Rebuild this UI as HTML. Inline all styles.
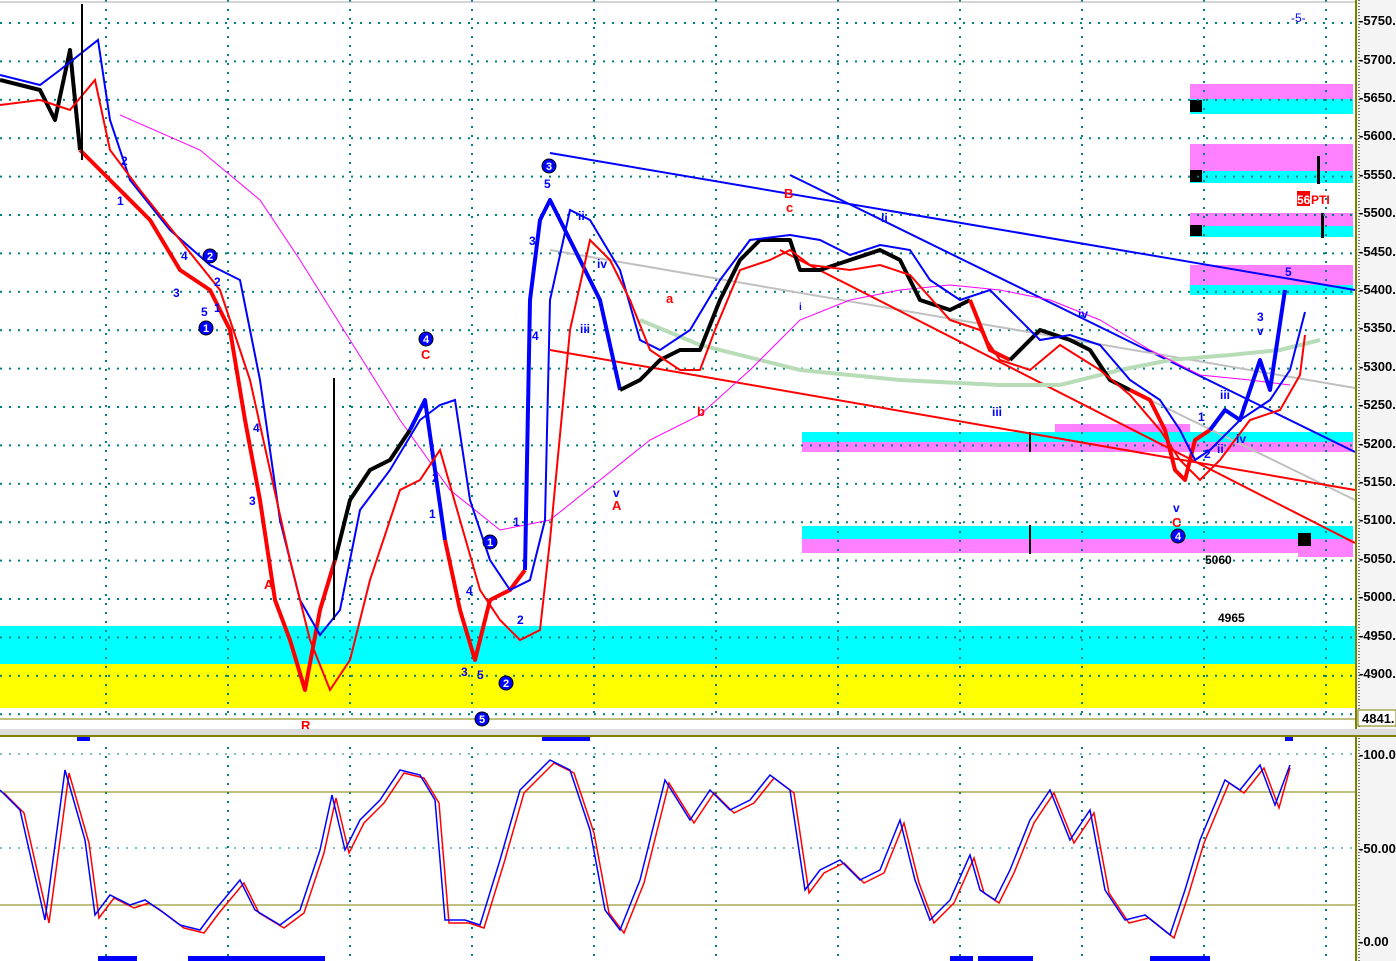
<!DOCTYPE html>
<html><head><meta charset="utf-8"><style>
html,body{margin:0;padding:0;background:#fff;overflow:hidden}
svg{display:block;font-family:"Liberation Sans",sans-serif}
</style></head><body>
<svg width="1396" height="961" viewBox="0 0 1396 961" xmlns="http://www.w3.org/2000/svg">
<defs>
<pattern id="hg" width="9" height="38.4" patternUnits="userSpaceOnUse" y="22">
<rect x="0" y="0" width="2" height="2" fill="#008080"/>
</pattern>
<pattern id="vg" width="122" height="9" patternUnits="userSpaceOnUse" x="105">
<rect x="0" y="0" width="2" height="2" fill="#008080"/>
</pattern>
</defs>
<rect width="1396" height="961" fill="#fff"/>
<!-- bands -->
<rect x="0" y="626" width="1355" height="38" fill="#00ffff"/>
<rect x="0" y="664" width="1355" height="44" fill="#ffff00"/>
<rect x="1190" y="84" width="163" height="15" fill="#ff80ff"/><rect x="1190" y="99" width="163" height="15" fill="#00ffff"/>
<rect x="1190" y="144" width="163" height="27" fill="#ff80ff"/><rect x="1190" y="171" width="163" height="12" fill="#00ffff"/>
<rect x="1190" y="213" width="163" height="13" fill="#ff80ff"/><rect x="1190" y="226" width="163" height="11" fill="#00ffff"/>
<rect x="1190" y="265" width="163" height="20" fill="#ff80ff"/><rect x="1190" y="285" width="163" height="10" fill="#00ffff"/>
<rect x="802" y="432" width="551" height="10" fill="#00ffff"/><rect x="802" y="442" width="551" height="10" fill="#ff80ff"/>
<rect x="1055" y="424" width="135" height="8" fill="#ff80ff"/>
<rect x="802" y="526" width="551" height="13" fill="#00ffff"/><rect x="802" y="539" width="496" height="14" fill="#ff80ff"/>
<rect x="1298" y="539" width="55" height="18" fill="#ff80ff"/>
<rect x="1190" y="100" width="12" height="12" fill="#000"/><rect x="1190" y="170" width="12" height="12" fill="#000"/>
<rect x="1190" y="225" width="12" height="11" fill="#000"/><rect x="1298" y="533" width="13" height="13" fill="#000"/>
<rect x="1317" y="156" width="3" height="28" fill="#000"/><rect x="1321" y="213" width="3" height="25" fill="#000"/>
<rect x="1029" y="432" width="2" height="20" fill="#000"/><rect x="1029" y="525" width="2" height="29" fill="#000"/>
<!-- grid -->
<rect x="0" y="0" width="1355" height="720" fill="url(#hg)"/>
<rect x="0" y="0" width="1355" height="720" fill="url(#vg)"/>
<line x1="0" y1="2" x2="1355" y2="2" stroke="#aaa"/>
<line x1="0" y1="719" x2="1355" y2="719" stroke="#808000"/>
<!-- trend lines -->
<g stroke-width="2" fill="none">
<line x1="550" y1="153" x2="1355" y2="290" stroke="#0000ff"/>
<line x1="790" y1="175" x2="1355" y2="452" stroke="#0000ff"/>
<line x1="550" y1="250" x2="1355" y2="388" stroke="#c0c0c0"/>
<line x1="1150" y1="400" x2="1355" y2="500" stroke="#c0c0c0"/>
<line x1="550" y1="350" x2="1355" y2="490" stroke="#ff0000"/>
<line x1="780" y1="250" x2="1355" y2="543" stroke="#ff0000"/>
<polyline stroke="#b8dcb8" stroke-width="4" points="640,320 700,345 800,370 900,380 1000,385 1060,385 1120,370 1170,360 1230,355 1280,350 1320,340"/>
<polyline stroke="#ff00ff" stroke-width="1" points="120,115 200,150 260,200 300,260 350,340 400,420 450,490 500,530 550,520 600,480 650,440 700,415 750,370 800,320 850,300 900,290 950,285 1000,290 1050,300 1100,320 1150,350 1200,375 1250,380 1290,385"/>
</g>
<!-- price -->
<g fill="none" stroke-width="4" stroke-linejoin="round">
<polyline stroke="#000" points="0,80 40,90 55,120 70,50 80,150"/>
<polyline stroke="#ff0000" points="80,150 100,170 120,190 150,220 180,270 210,290 230,330 245,420 260,500 275,600 290,640 305,690 320,610 335,560"/>
<polyline stroke="#000" points="335,560 350,500 370,470 390,460 410,430"/>
<polyline stroke="#0000ff" points="410,430 425,400 435,470 445,540"/>
<polyline stroke="#ff0000" points="445,540 460,610 475,660 490,600 510,590 525,570"/>
<polyline stroke="#0000ff" points="525,570 530,300 540,220 550,200 565,230 580,260 600,300 620,390"/>
<polyline stroke="#000" points="620,390 640,380 660,360 680,350 700,350 720,300 740,260 760,240 790,240 800,270 820,270 850,260 880,250 900,260 920,300 950,310 970,300"/>
<polyline stroke="#ff0000" points="970,300 990,350 1010,360"/>
<polyline stroke="#000" points="1010,360 1040,330 1070,340 1090,350 1110,380 1130,390"/>
<polyline stroke="#ff0000" points="1130,390 1150,400 1165,430 1175,470 1185,480 1195,440 1210,430"/>
<polyline stroke="#0000ff" points="1210,430 1225,410 1240,420 1260,360 1270,390 1285,290"/>
</g>
<g fill="none" stroke-width="2">
<polyline stroke="#0000ff" points="0,75 40,85 60,70 98,40 110,120 130,180 170,230 210,265 240,280 260,380 280,520 300,600 320,635 340,610 360,510 390,470 420,420 440,405 455,400 470,500 490,560 510,590 530,580 545,520 550,300 570,210 590,220 620,270 640,340 660,350 690,330 720,280 750,240 790,235 820,240 850,255 880,245 910,250 930,280 960,300 990,290 1010,310 1040,340 1070,335 1100,345 1130,380 1160,400 1180,430 1195,460 1210,450 1240,420 1270,400 1290,370 1305,312"/>
<polyline stroke="#ff0000" points="0,105 40,100 70,110 95,80 110,150 140,190 180,240 220,290 250,380 270,470 290,560 310,640 330,690 350,660 370,580 400,490 420,480 440,450 460,520 480,590 500,620 520,640 540,630 550,540 570,330 590,240 610,260 630,300 650,350 680,370 700,370 715,330 740,270 770,260 790,250 810,265 850,270 880,265 910,275 950,320 980,330 1000,360 1030,370 1060,345 1100,370 1130,395 1160,430 1180,460 1200,480 1220,460 1250,420 1280,410 1300,375 1305,335"/>
<line x1="82" y1="4" x2="82" y2="160" stroke="#000"/>
<line x1="334" y1="378" x2="334" y2="620" stroke="#000"/>
</g>
<!-- labels -->
<g font-size="12" font-weight="bold" fill="#0000ff">
<text x="121" y="165">2</text><text x="117" y="205">1</text><text x="181" y="260">4</text><text x="173" y="297">3</text><text x="201" y="316">5</text><text x="214" y="286">2</text><text x="214" y="312">1</text>
<text x="253" y="432">4</text><text x="249" y="505">3</text><text x="432" y="482">2</text><text x="429" y="518">1</text><text x="466" y="595">4</text><text x="461" y="676">3</text><text x="477" y="679">5</text><text x="513" y="526">1</text><text x="517" y="624">2</text>
<text x="529" y="245">3</text><text x="544" y="188">5</text><text x="532" y="340">4</text><text x="578" y="220">ii</text><text x="597" y="268">iv</text><text x="580" y="333">iii</text><text x="613" y="497">v</text>
<text x="799" y="310" font-size="10">i</text><text x="881" y="222">ii</text><text x="992" y="416">iii</text><text x="1078" y="318">iv</text><text x="1173" y="512">v</text>
<text x="1198" y="421">1</text><text x="1204" y="458">2</text><text x="1220" y="399">iii</text><text x="1217" y="453">ii</text><text x="1236" y="443">iv</text><text x="1257" y="321">3</text><text x="1257" y="335">v</text><text x="1285" y="276">5</text><text x="1291" y="22" font-weight="normal">-5-</text>
</g>
<g font-size="13" font-weight="bold" fill="#ff0000">
<text x="264" y="589">A</text><text x="301" y="730">R</text><text x="421" y="359">C</text><text x="612" y="510">A</text><text x="666" y="303">a</text><text x="697" y="416">b</text><text x="784" y="198">B</text><text x="786" y="212">c</text><text x="1172" y="527">C</text>
</g>
<g font-size="11" font-weight="bold" fill="#fff" text-anchor="middle">
<circle cx="210" cy="256" r="7" fill="#0000ff" stroke="#000"/><text x="210" y="260">2</text>
<circle cx="206" cy="328" r="7" fill="#0000ff" stroke="#000"/><text x="206" y="332">1</text>
<circle cx="426" cy="339" r="7" fill="#0000ff" stroke="#000"/><text x="426" y="343">4</text>
<circle cx="490" cy="542" r="7" fill="#0000ff" stroke="#000"/><text x="490" y="546">1</text>
<circle cx="506" cy="683" r="7" fill="#0000ff" stroke="#000"/><text x="506" y="687">2</text>
<circle cx="482" cy="719" r="7" fill="#0000ff" stroke="#000"/><text x="482" y="723">5</text>
<circle cx="549" cy="166" r="7" fill="#0000ff" stroke="#000"/><text x="549" y="170">3</text>
<circle cx="1178" cy="536" r="7" fill="#0000ff" stroke="#000"/><text x="1178" y="540">4</text>
</g>
<rect x="1297" y="191" width="13" height="15" fill="#ff0000"/>
<text x="1297" y="204" font-size="12" font-weight="bold" fill="#fff">56</text><text x="1311" y="204" font-size="12" font-weight="bold" fill="#ff0000">PTI</text>
<text x="1205" y="564" font-size="12" font-weight="bold">5060</text>
<text x="1218" y="622" font-size="12" font-weight="bold">4965</text>
<!-- axis -->
<rect x="1355" y="0" width="41" height="961" fill="#f4f4f4"/>
<line x1="1356" y1="0" x2="1356" y2="961" stroke="#808000" stroke-width="2"/>
<line x1="1359" y1="0" x2="1359" y2="961" stroke="#000" stroke-dasharray="1,2"/>
<g font-size="13" font-weight="bold" fill="#000">
<text x="1359" y="25">-5750.</text><text x="1359" y="64">-5700.</text><text x="1359" y="102">-5650.</text><text x="1359" y="140">-5600.</text><text x="1359" y="179">-5550.</text><text x="1359" y="217">-5500.</text><text x="1359" y="256">-5450.</text><text x="1359" y="294">-5400.</text><text x="1359" y="332">-5350.</text><text x="1359" y="371">-5300.</text><text x="1359" y="409">-5250.</text><text x="1359" y="448">-5200.</text><text x="1359" y="486">-5150.</text><text x="1359" y="524">-5100.</text><text x="1359" y="563">-5050.</text><text x="1359" y="601">-5000.</text><text x="1359" y="640">-4950.</text><text x="1359" y="678">-4900.</text>
</g>
<rect x="1358" y="710" width="38" height="16" fill="#fff" stroke="#808000"/>
<text x="1362" y="723" font-size="13" font-weight="bold">4841.</text>
<!-- separator -->
<rect x="0" y="729" width="1396" height="6" fill="#ddd"/>
<line x1="0" y1="736" x2="1396" y2="736" stroke="#808000" stroke-width="2"/>
<rect x="77" y="737" width="13" height="4" fill="#0000ff"/><rect x="542" y="737" width="48" height="4" fill="#0000ff"/><rect x="1285" y="737" width="8" height="4" fill="#0000ff"/>
<!-- oscillator -->
<rect x="0" y="740" width="1355" height="220" fill="url(#vg)"/>
<line x1="0" y1="754" x2="1355" y2="754" stroke="#008080" stroke-dasharray="2,7"/>
<line x1="0" y1="848" x2="1355" y2="848" stroke="#008080" stroke-dasharray="2,7"/>
<line x1="0" y1="792" x2="1355" y2="792" stroke="#808000"/>
<line x1="0" y1="905" x2="1355" y2="905" stroke="#808000"/>
<g fill="none" stroke-width="1.5">
<polyline stroke="#ff0000" transform="translate(4,3)" points="0,790 20,810 45,920 65,770 85,840 95,915 110,895 130,905 145,900 160,910 180,925 200,930 215,910 240,880 255,910 280,925 300,910 320,850 332,795 345,850 360,820 380,800 400,770 420,775 435,800 445,920 465,920 480,925 500,860 520,790 550,760 570,770 590,830 605,910 620,930 640,880 665,780 690,820 710,790 730,810 750,800 770,775 790,790 805,890 820,870 840,860 860,880 880,870 900,820 915,880 930,920 950,900 970,855 980,890 995,900 1010,870 1030,820 1050,790 1070,840 1090,810 1105,890 1125,920 1145,915 1170,935 1185,890 1200,840 1225,780 1240,790 1260,765 1275,805 1286,765"/>
<polyline stroke="#0000ff" points="0,790 20,810 45,920 65,770 85,840 95,915 110,895 130,905 145,900 160,910 180,925 200,930 215,910 240,880 255,910 280,925 300,910 320,850 332,795 345,850 360,820 380,800 400,770 420,775 435,800 445,920 465,920 480,925 500,860 520,790 550,760 570,770 590,830 605,910 620,930 640,880 665,780 690,820 710,790 730,810 750,800 770,775 790,790 805,890 820,870 840,860 860,880 880,870 900,820 915,880 930,920 950,900 970,855 980,890 995,900 1010,870 1030,820 1050,790 1070,840 1090,810 1105,890 1125,920 1145,915 1170,935 1185,890 1200,840 1225,780 1240,790 1260,765 1275,805 1290,765"/>
</g>
<rect x="98" y="956" width="39" height="5" fill="#0000ff"/><rect x="188" y="956" width="137" height="5" fill="#0000ff"/><rect x="950" y="956" width="23" height="5" fill="#0000ff"/><rect x="978" y="956" width="55" height="5" fill="#0000ff"/><rect x="1150" y="956" width="60" height="5" fill="#0000ff"/>
<g font-size="13" font-weight="bold">
<text x="1359" y="759">-100.0</text><text x="1359" y="853">-50.00</text><text x="1359" y="946">-0.00</text>
</g>
</svg>
</body></html>
